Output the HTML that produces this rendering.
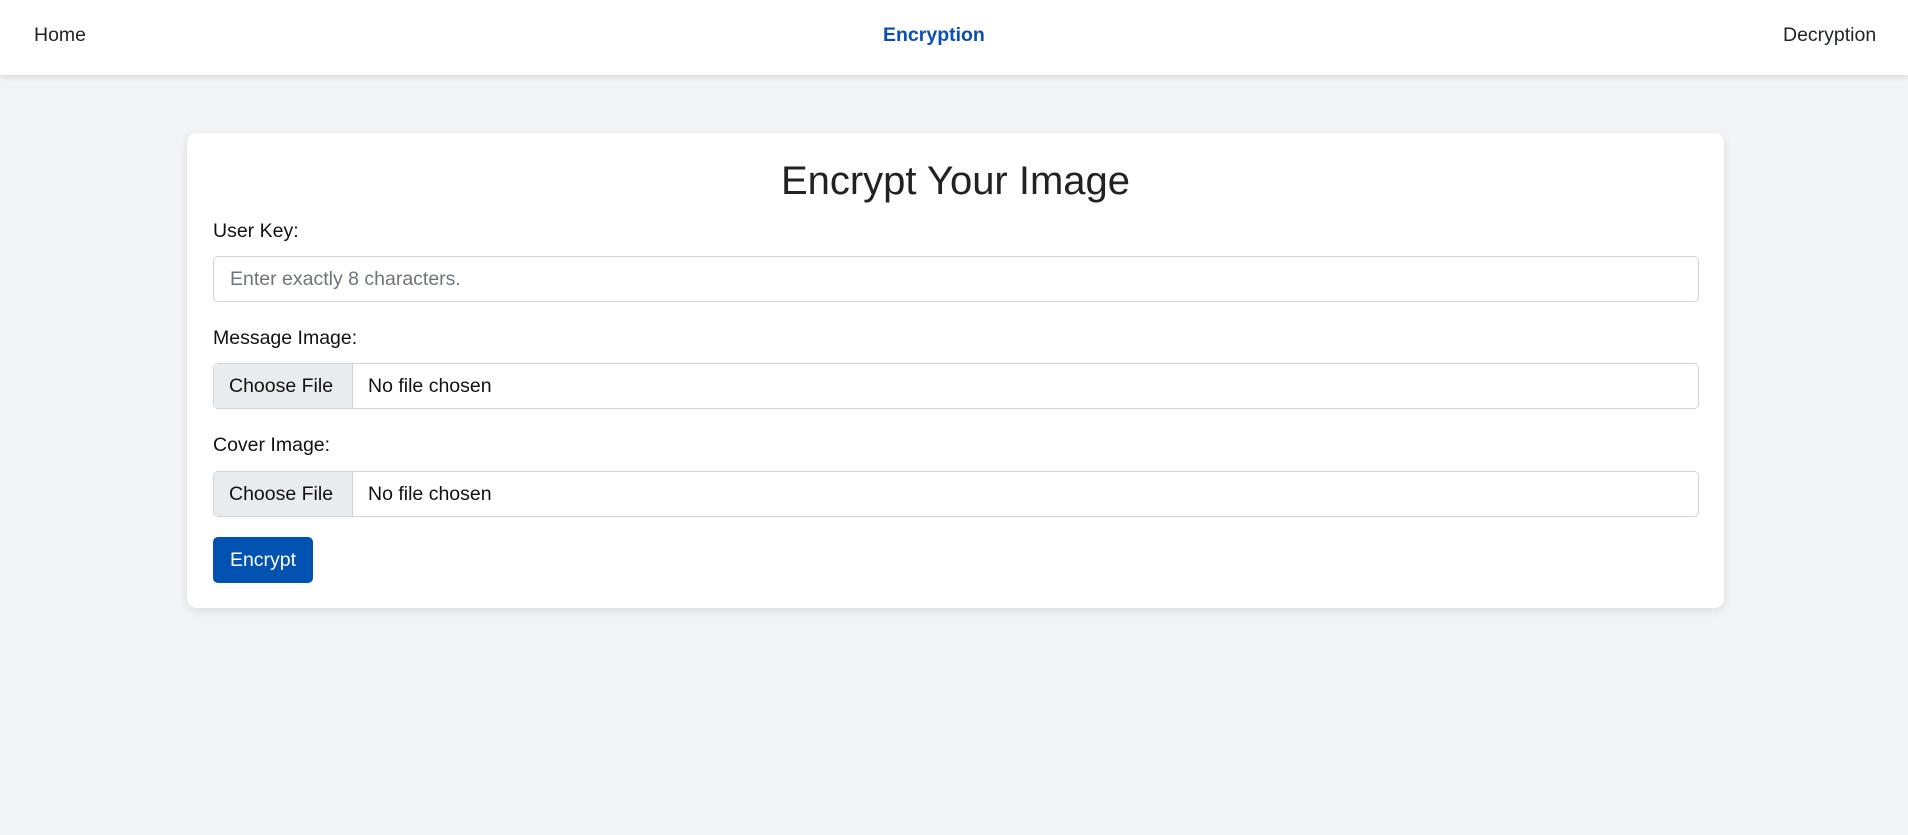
<!DOCTYPE html>
<html><head><meta charset="utf-8"><style>
*{box-sizing:border-box;margin:0;padding:0}
body{width:1908px;height:835px;background:#f3f4f6;font-family:"Liberation Sans",Arial,sans-serif;color:#212529;overflow:hidden;position:relative}
.nav{position:absolute;left:0;top:0;width:1908px;height:75px;background:#fff;box-shadow:0 2px 6px rgba(0,0,0,.12)}
.nav span{position:absolute;top:24px;font-size:19.5px;line-height:23px}
.card{position:absolute;left:187px;top:133px;width:1537px;height:475px;background:#fff;border-radius:10px;box-shadow:0 3px 10px rgba(0,0,0,.1)}
.abs{position:absolute}
.lbl{position:absolute;left:26px;font-size:19.5px;line-height:23px;color:#111}
.inp{position:absolute;left:26px;width:1486px;height:46px;border:1px solid #ced4da;border-radius:5px;background:#fff;font-size:19.5px}
.choose{position:absolute;left:0;top:0;width:139px;height:44px;background:#e9ecef;border-right:1px solid #ced4da;border-radius:5px 0 0 5px;padding:11px 0 0 15px;color:#111}
.nf{position:absolute;left:154px;top:11px;color:#111}
</style></head><body>
<div class="nav">
<span style="left:34px">Home</span>
<span style="left:883px;font-weight:bold;color:#0b4fb0">Encryption</span>
<span style="left:1783px">Decryption</span>
</div>
<div class="card">
<div class="abs" style="left:0;width:100%;top:24px;text-align:center;font-size:40px;line-height:48px;color:#222">Encrypt Your Image</div>
<div class="lbl" style="top:87px">User Key:</div>
<div class="inp" style="top:123px"><span class="abs" style="left:16px;top:11px;color:#6c757d">Enter exactly 8 characters.</span></div>
<div class="lbl" style="top:194px">Message Image:</div>
<div class="inp" style="top:230px"><div class="choose">Choose File</div><span class="nf">No file chosen</span></div>
<div class="lbl" style="top:301px">Cover Image:</div>
<div class="inp" style="top:338px"><div class="choose">Choose File</div><span class="nf">No file chosen</span></div>
<div class="abs" style="left:26px;top:404px;width:100px;height:46px;background:#0252b1;border-radius:5px;color:#fff;font-size:19.5px;text-align:center;line-height:46px">Encrypt</div>
</div>
</body></html>
